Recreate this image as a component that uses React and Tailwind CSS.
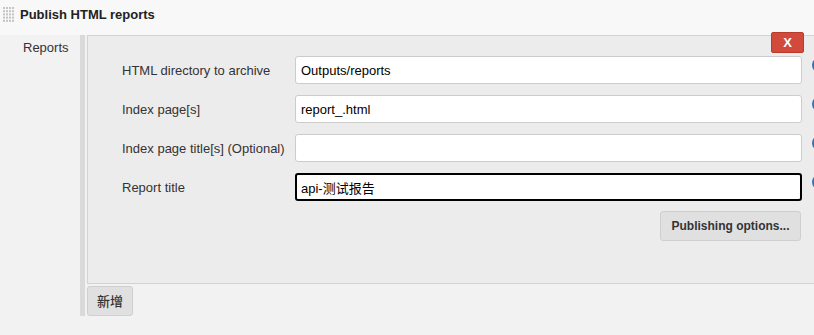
import React from "react";

function DragHandle() {
  const dots = [];
  for (let r = 0; r < 5; r++) {
    for (let c = 0; c < 4; c++) {
      dots.push(<rect key={r + "-" + c} x={c * 3} y={r * 3.2} width="2" height="2" fill="#c4c4c4" />);
    }
  }
  return (
    <svg width="11" height="16" viewBox="0 0 11 16" className="shrink-0">
      {dots}
    </svg>
  );
}

function HelpIcon() {
  return <div className="w-[16px] h-[16px] rounded-full bg-[#3b6fa8] shrink-0 mt-[-11px]" />;
}

function Row({ label, value, focused }) {
  return (
    <div className="flex items-center h-[28px]">
      <div className="w-[173px] shrink-0 text-[#333]">{label}</div>
      <input
        readOnly
        value={value}
        className={
          "w-[507px] h-[28px] shrink-0 bg-white rounded-[3px] text-[13px] text-black outline-none " +
          (focused ? "border-2 border-black px-[4px]" : "border border-[#cccccc] px-[5px]")
        }
      />
      <div className="ml-[10px]">
        <HelpIcon />
      </div>
    </div>
  );
}

export default function App() {
  return (
    <div className="w-[814px] h-[335px] overflow-hidden bg-[#f2f2f2] text-[13px] leading-[15px] text-[#333] font-['Liberation_Sans','Noto_Sans_CJK_SC',sans-serif]">
      <div className="h-[35px] bg-[#f8f8f8] flex items-start pt-[7px] pl-[3px] gap-[6px]">
        <DragHandle />
        <div className="font-bold text-[#222]">Publish HTML reports</div>
      </div>

      <div className="flex">
        <div className="w-[80px] shrink-0 pl-[23px] pt-[5px]">Reports</div>
        <div className="w-[5px] h-[281px] shrink-0 bg-[#dadada]" />
        <div className="pl-[2px] flex-1 min-w-0">
          <div className="relative h-[249px] border border-r-0 border-[#d3d3d3] bg-[#ececec] pl-[34px] pt-[20px]">
            <button className="absolute right-[10px] top-[-4px] w-[33px] h-[21px] bg-[#d24a3b] border border-[#b83b2d] rounded-[2px] text-white font-bold text-[13px] leading-none">
              X
            </button>
            <div className="flex flex-col gap-[11px]">
              <Row label="HTML directory to archive" value="Outputs/reports" />
              <Row label="Index page[s]" value="report_.html" />
              <Row label="Index page title[s] (Optional)" value="" />
              <Row label="Report title" value="api-测试报告" focused />
            </div>
            <div className="flex mt-[10px] w-[679px] justify-end">
              <button className="w-[141px] h-[30px] bg-[#e0e0e0] border border-[#cfcfcf] rounded-[3px] font-bold text-[12px] text-[#333]">
                Publishing options...
              </button>
            </div>
          </div>
          <button className="mt-[2px] w-[46px] h-[30px] bg-[#e0e0e0] border border-[#cfcfcf] rounded-[3px] font-medium text-[13px] text-[#333]">
            新增
          </button>
        </div>
      </div>
    </div>
  );
}
